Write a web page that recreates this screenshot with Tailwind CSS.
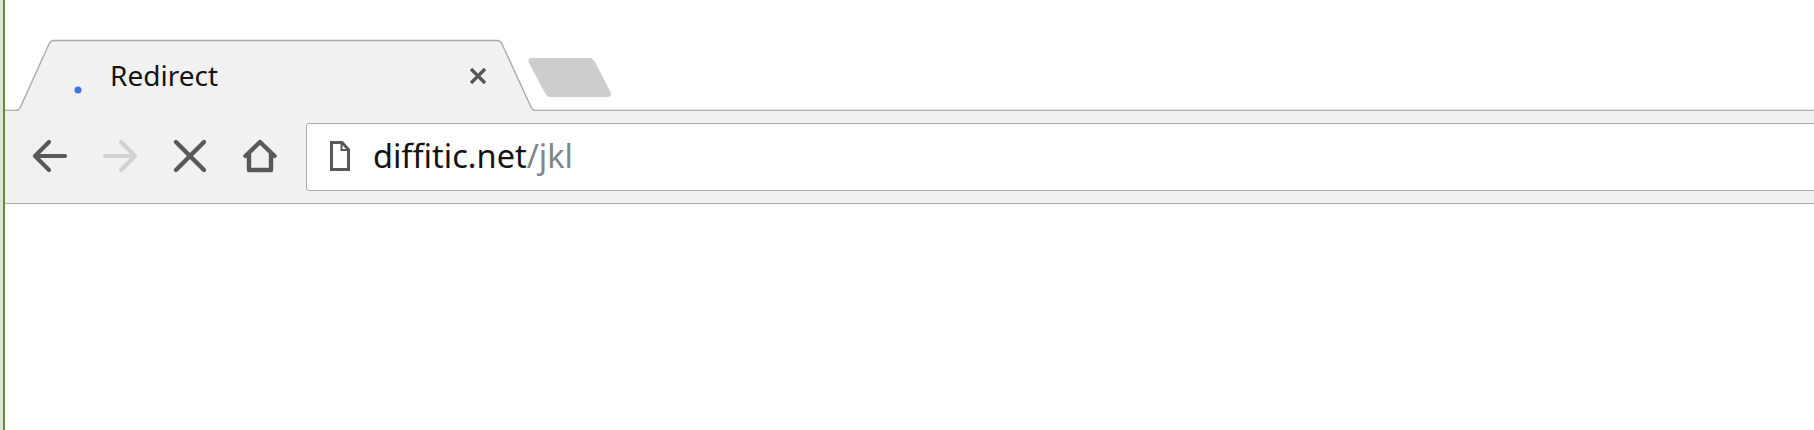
<!DOCTYPE html>
<html>
<head>
  <title>Redirect</title>
  <script src="https://cdn.jsdelivr.net/npm/@tailwindcss/browser@4"></script>
</head>
<body class="bg-white font-['Noto_Sans','Open_Sans',sans-serif]">
  <div class="relative w-[1814px] h-[430px] overflow-hidden bg-white">
    <!-- tab strip -->
    <div class="relative h-[111px]">
      <svg class="absolute inset-0" width="1814" height="111" viewBox="0 0 1814 111" fill="none">
        <path d="M0 110.5H16Q19 110.5 20.5 107L49 44Q50.5 40.5 54 40.5H497Q500.5 40.5 502 44L531 107Q532.5 110.5 536 110.5H1814V111H0Z" fill="#f1f1f1"/>
        <path d="M0 110.5H16Q19 110.5 20.5 107L49 44Q50.5 40.5 54 40.5H497Q500.5 40.5 502 44L531 107Q532.5 110.5 536 110.5H1814" stroke="#ababab" stroke-width="1.4"/>
        <path d="M532 58H589Q593 58 595 62L610 91Q613 97 607 97H551Q547 97 545 93L529 63Q527 58 532 58Z" fill="#cdcdcd"/>
        <circle cx="78" cy="90" r="3.5" fill="#3b78e7"/>
      </svg>
      <div class="relative flex items-center pt-[40px] h-[111px]">
        <div class="flex items-center h-[70px] pl-[110px] pb-[2px] w-[469px]">
          <span class="text-[28px] leading-none text-[#141414]">Redirect</span>
        </div>
        <svg width="18" height="18" viewBox="0 0 18 18" fill="none" stroke="#555" stroke-width="3.2">
          <path d="M2 2L16 16M16 2L2 16"/>
        </svg>
      </div>
    </div>
    <!-- toolbar -->
    <div class="flex items-center h-[93px] pl-[15px] pb-[1px] bg-[#f1f1f1] border-b border-[#ababab]">
      <button class="flex items-center justify-center w-[70px] h-[40px] pb-[1px]">
        <svg width="36" height="36" viewBox="0 0 36 36" fill="none" stroke="#595959" stroke-width="4.2" stroke-linecap="round" stroke-linejoin="round">
          <path d="M33 18H3M17 4L3 18L17 32"/>
        </svg>
      </button>
      <button class="flex items-center justify-center w-[70px] h-[40px] pb-[1px]">
        <svg width="36" height="36" viewBox="0 0 36 36" fill="none" stroke="#d2d2d2" stroke-width="4.2" stroke-linecap="round" stroke-linejoin="round">
          <path d="M3 18H33M19 4L33 18L19 32"/>
        </svg>
      </button>
      <button class="flex items-center justify-center w-[70px] h-[40px] pb-[1px]">
        <svg width="36" height="36" viewBox="0 0 36 36" fill="none" stroke="#595959" stroke-width="4.4" stroke-linecap="round">
          <path d="M4 4L32 32M32 4L4 32"/>
        </svg>
      </button>
      <button class="flex items-center justify-center w-[70px] h-[40px] pb-[1px]">
        <svg width="36" height="36" viewBox="0 0 36 36" fill="none" stroke="#595959" stroke-width="4.4" stroke-linecap="round" stroke-linejoin="round">
          <path d="M3.5 18L18 4L32.5 18M7 15V32H29V15"/>
        </svg>
      </button>
      <!-- address bar -->
      <div class="flex items-center flex-1 h-[68px] ml-[11px] -mr-[4px] pl-[23px] bg-white border border-[#ababab] rounded-[3px]">
        <svg width="20" height="30" viewBox="0 0 20 30" fill="none" stroke="#595959" stroke-width="3" class="shrink-0 mb-[2px]">
          <path d="M1.5 1.5H12L18.5 8.5V28.5H1.5Z"/>
          <path d="M11.5 1.5V9H18.5" stroke-width="2"/>
        </svg>
        <span class="ml-[23px] text-[32.5px] leading-none text-[#141414]">diffitic.net<span class="text-[#7f8689]">/jkl</span></span>
      </div>
    </div>
    <!-- window edge -->
    <div class="absolute left-0 inset-y-0 w-[5px] border-l-[3px] border-[#dfe3da] bg-[#5f8f32]"></div>
  </div>
</body>
</html>
